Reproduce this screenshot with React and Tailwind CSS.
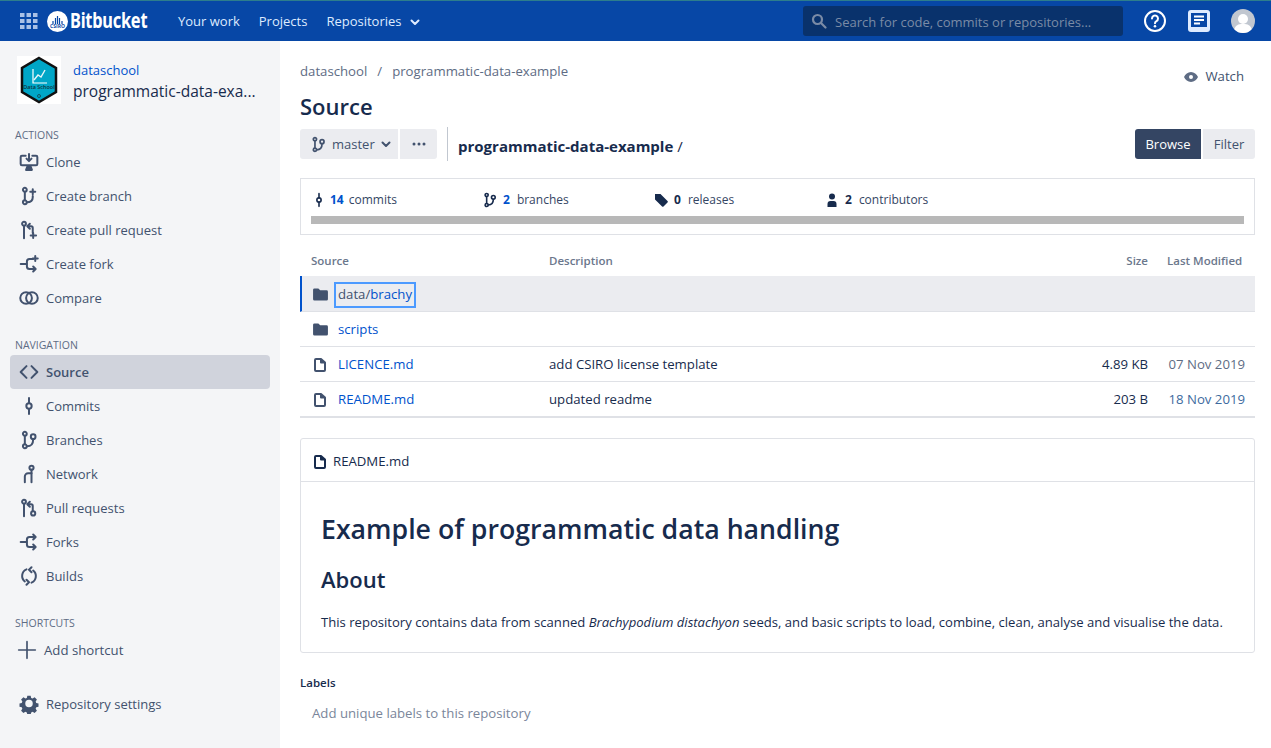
import React from 'react';

const Svg = ({ size = 24, sw = 2.4, className = '', children }) => (
    <svg width={size} height={size} viewBox="0 0 24 24" fill="none" stroke="currentColor" strokeWidth={sw} strokeLinecap="round" strokeLinejoin="round" className={`shrink-0 ${className}`}>{children}</svg>
);

const CloneIcon = (p) => (
    <Svg {...p}>
        <path d="M8 4.500H3.500A1.500 1.500 0 0 0 2 6v8.500A1.500 1.500 0 0 0 3.500 16h17a1.500 1.500 0 0 0 1.500-1.500V6a1.500 1.500 0 0 0-1.500-1.500H16" />
        <path d="M12 2.500v8M9 8l3 3 3-3" />
        <path d="M8.500 21.500l1.500-4h4l1.500 4z" fill="currentColor" />
    </Svg>
);
const BranchPath = () => (
    <>
        <circle cx="7" cy="4.500" r="2.300" />
        <circle cx="7" cy="19.500" r="2.300" />
        <path d="M7 7v10" />
    </>
);
const CreateBranchIcon = (p) => (
    <Svg {...p}>
        <BranchPath />
        <path d="M9.500 19.500c4.500 0 7-1.500 7-6v-1.500" />
        <path d="M16.500 4v6M13.500 7h6" />
    </Svg>
);
const CreatePrIcon = (p) => (
    <Svg {...p}>
        <circle cx="6" cy="4.500" r="2.300" />
        <path d="M6 7v15" />
        <path d="M11 7.500h3.500a2 2 0 0 1 2 2v6" />
        <path d="M13 4.500l-3 3 3 3" />
        <path d="M17 15.500v6M14 18.500h6.500" />
    </Svg>
);
const CreateForkIcon = (p) => (
    <Svg {...p}>
        <path d="M2 12h7" />
        <path d="M17 6h-4.500a3 3 0 0 0-3 3v6a3 3 0 0 0 3 3H19" />
        <path d="M17 15l3 3-3 3" />
        <path d="M19.500 2.500v6M16.500 5.500h6" />
    </Svg>
);
const CompareIcon = (p) => (
    <Svg {...p}>
        <circle cx="8.500" cy="12" r="7" />
        <circle cx="15.500" cy="12" r="7" />
    </Svg>
);
const SourceIcon = (p) => (
    <Svg {...p}>
        <path d="M9 5l-7 7 7 7M15 5l7 7-7 7" />
    </Svg>
);
const CommitIcon = (p) => (
    <Svg {...p}>
        <circle cx="12" cy="12" r="3.200" />
        <path d="M12 2.500v6M12 15.500v6" />
    </Svg>
);
const BranchesIcon = (p) => (
    <Svg {...p}>
        <BranchPath />
        <circle cx="17" cy="8" r="2.800" />
        <path d="M9.500 19.500c4.500 0 7.500-1.500 7.500-8.500" />
    </Svg>
);
const NetworkIcon = (p) => (
    <Svg {...p}>
        <circle cx="15" cy="4.500" r="2.500" />
        <path d="M15 7v15" />
        <path d="M15 11h-4a4 4 0 0 0-4 4v7" />
    </Svg>
);
const PrIcon = (p) => (
    <Svg {...p}>
        <circle cx="6" cy="4.500" r="2.300" />
        <path d="M6 7v15" />
        <path d="M11 7.500h3.500a2 2 0 0 1 2 2v6" />
        <path d="M13 4.500l-3 3 3 3" />
        <circle cx="17" cy="18.500" r="2.500" />
    </Svg>
);
const ForksIcon = (p) => (
    <Svg {...p}>
        <path d="M2 12h7" />
        <path d="M19 6h-6.500a3 3 0 0 0-3 3v6a3 3 0 0 0 3 3H19" />
        <path d="M17 3l3 3-3 3M17 15l3 3-3 3" />
    </Svg>
);
const BuildsIcon = (p) => (
    <Svg {...p}>
        <path d="M17 5.500A8.500 8.500 0 0 1 15 20" />
        <path d="M7 18.500A8.500 8.500 0 0 1 9 4" />
        <path d="M15 1.500l-3 3 3 3M9 22.500l3-3-3-3" />
    </Svg>
);
const PlusIcon = (p) => (
    <Svg {...p} sw={2}>
        <path d="M12 2v20M2 12h20" />
    </Svg>
);
const GearIcon = ({ size = 24, className = '' }) => (
    <svg width={size} height={size} viewBox="0 0 24 24" fill="currentColor" className={`shrink-0 ${className}`}>
        <path fillRule="evenodd" d="M10 2.500h4l.6 2.700 1.700.7 2.400-1.500 2.800 2.800-1.500 2.400.7 1.700 2.700.6v4l-2.700.6-.7 1.700 1.500 2.400-2.800 2.800-2.400-1.500-1.700.7-.6 2.700h-4l-.6-2.700-1.700-.7-2.400 1.500-2.800-2.800 1.500-2.400-.7-1.700-2.700-.6v-4l2.700-.6.7-1.700-1.500-2.400 2.800-2.800 2.400 1.500 1.700-.7zM12 7.500a4.500 4.500 0 1 0 0 9 4.500 4.500 0 0 0 0-9z" transform="translate(0 -.5)" />
    </svg>
);
const FolderIcon = ({ className = '' }) => (
    <svg width="15" height="13" viewBox="0 0 16 14" fill="currentColor" className={`shrink-0 ${className}`}>
        <path d="M1.500 0.500h4.200l2 2h6.800a1.500 1.500 0 0 1 1.500 1.500v8a1.500 1.500 0 0 1-1.500 1.500h-13A1.500 1.500 0 0 1 0 12V2A1.500 1.500 0 0 1 1.500 0.500z" />
    </svg>
);
const FileIcon = ({ className = '' }) => (
    <svg width="12" height="14" viewBox="0 0 12 14" fill="none" stroke="currentColor" strokeWidth="2" strokeLinejoin="round" className={`shrink-0 ${className}`}>
        <path d="M2 1h5v3.500h4V12a1 1 0 0 1-1 1H2a1 1 0 0 1-1-1V2a1 1 0 0 1 1-1zM7 1l4 3.500" />
    </svg>
);
const Chevron = ({ className = '' }) => (
    <svg width="10" height="7" viewBox="0 0 10 7" fill="none" stroke="currentColor" strokeWidth="2" strokeLinecap="round" strokeLinejoin="round" className={`shrink-0 ${className}`}>
        <path d="M1.500 1.500L5 5l3.500-3.500" />
    </svg>
);

const actions = [
    ['Clone', CloneIcon],
    ['Create branch', CreateBranchIcon],
    ['Create pull request', CreatePrIcon],
    ['Create fork', CreateForkIcon],
    ['Compare', CompareIcon],
];
const navigation = [
    ['Source', SourceIcon],
    ['Commits', CommitIcon],
    ['Branches', BranchesIcon],
    ['Network', NetworkIcon],
    ['Pull requests', PrIcon],
    ['Forks', ForksIcon],
    ['Builds', BuildsIcon],
];

const SideLabel = ({ children, className = '' }) => (
    <div className={`pl-[15px] h-4 leading-4 text-[10.500px] font-medium text-[#5e6c84] uppercase ${className}`}>{children}</div>
);

const SideItem = ({ label, icon: Icon, active }) => (
    <div className={`flex items-center h-[34px] w-[260px] ml-[10px] pl-[9px] rounded ${active ? 'bg-[#d0d3dc] font-semibold' : ''} text-[#42526e]`}>
        <Icon size={20} className="text-[#42526e]" />
        <span className="ml-[7px] pt-[2px] text-[13px]">{label}</span>
    </div>
);

const Stat = ({ icon, num, label, blue, tight }) => (
    <div className="flex items-center w-[171px] text-[12px] text-[#172b4d]">
        <span className="w-4 flex justify-center">{icon}</span>
        <span className={`font-bold ${tight ? 'ml-[3px]' : 'ml-[5px]'} ${blue ? 'text-[#0052cc]' : ''}`}>{num}</span>
        <span className={`${tight ? 'ml-[5px]' : 'ml-[7px]'} text-[#344563]`}>{label}</span>
    </div>
);

const rows = [
    { name: 'scripts', folder: true },
    { name: 'LICENCE.md', desc: 'add CSIRO license template', size: '4.89 KB', date: '07 Nov 2019' },
    { name: 'README.md', desc: 'updated readme', size: '203 B', date: '18 Nov 2019', dateBlue: true },
];

const App = () => {
    return (
        <div className="w-[1271px] h-[748px] overflow-hidden flex flex-col bg-white text-[#172b4d] font-['Open_Sans','Noto_Sans',sans-serif] text-[13.200px]">
            <header className="h-[41px] shrink-0 bg-[#0747a6] border-t border-[#2d7d8c] flex items-center text-[#deebff] pr-[16px]">
                <svg width="18" height="16" viewBox="0 0 18 16" fill="#a9c1e6" className="ml-[20px] shrink-0">
                    <rect x="0" y="0" width="4.500" height="4" /><rect x="6.500" y="0" width="4.500" height="4" /><rect x="13" y="0" width="4.500" height="4" />
                    <rect x="0" y="6" width="4.500" height="4" /><rect x="6.500" y="6" width="4.500" height="4" /><rect x="13" y="6" width="4.500" height="4" />
                    <rect x="0" y="12" width="4.500" height="4" /><rect x="6.500" y="12" width="4.500" height="4" /><rect x="13" y="12" width="4.500" height="4" />
                </svg>
                <div className="ml-[9px] w-[21px] h-[21px] rounded-full bg-white flex flex-col items-center justify-end pb-[3px] shrink-0">
                    <svg width="13" height="8" viewBox="0 0 13 8" stroke="#0747a6" strokeWidth="1.200"><path d="M2 8V5M4.500 8V2M6.500 8V0M8.500 8V2M11 8V5" /></svg>
                    <span className="text-[5px] leading-[5px] font-bold text-[#0747a6]">CSIRO</span>
                </div>
                <span className="ml-[2px] w-[77px] text-[21px] font-bold text-white tracking-[-0.3px] font-['Noto_Sans',sans-serif] whitespace-nowrap origin-left scale-x-[0.78]">Bitbucket</span>
                <nav className="flex items-center ml-[31px] pt-[2px] text-[13px] whitespace-nowrap">
                    <span>Your work</span>
                    <span className="ml-[19px]">Projects</span>
                    <span className="ml-[19px]">Repositories</span>
                    <Chevron className="ml-[8px] text-[#deebff]" />
                </nav>
                <div className="ml-auto w-[320px] h-[30px] rounded-[3px] bg-[#09326c] flex items-center pl-[8px]">
                    <svg width="16" height="16" viewBox="0 0 16 16" fill="none" stroke="#7a8ba6" strokeWidth="2.200" strokeLinecap="round" className="shrink-0">
                        <circle cx="6.500" cy="6.500" r="4.500" /><path d="M10 10l4.500 4.500" />
                    </svg>
                    <span className="ml-[8px] pt-[4px] text-[13px] text-[#7a8ba6] whitespace-nowrap">Search for code, commits or repositories...</span>
                </div>
                <svg width="24" height="24" viewBox="0 0 24 24" fill="none" className="ml-[20px] shrink-0">
                    <circle cx="12" cy="12" r="10" stroke="white" strokeWidth="2" />
                    <path d="M9 9.500a3 3 0 1 1 4.500 2.600c-1 .6-1.500 1.100-1.500 2.100" stroke="white" strokeWidth="2" strokeLinecap="round" />
                    <circle cx="12" cy="17.300" r="1.300" fill="white" />
                </svg>
                <svg width="22" height="22" viewBox="0 0 22 22" className="ml-[21px] shrink-0">
                    <rect x="0" y="0" width="22" height="22" rx="3" fill="#deebff" />
                    <path d="M3 3h16v14H3z" fill="#0747a6" />
                    <path d="M6 6.500h10M6 10h10M6 13.500h6" stroke="white" strokeWidth="2" />
                </svg>
                <div className="ml-[21px] w-6 h-6 rounded-full bg-[#c1c7d0] overflow-hidden relative shrink-0">
                    <div className="absolute left-[7px] top-[5px] w-[10px] h-[10px] rounded-full bg-white" />
                    <div className="absolute left-[3px] top-[15px] w-[18px] h-[14px] rounded-full bg-white" />
                </div>
            </header>

            <div className="flex flex-1 min-h-0">
                <aside className="w-[280px] shrink-0 bg-[#f4f5f7] flex flex-col">
                    <div className="flex items-start pl-[17px] pt-[15px] h-[79px]">
                        <div className="w-[44px] h-[48px] bg-white flex items-center justify-center shrink-0">
                            <svg width="40" height="48" viewBox="0 0 40 48">
                                <path d="M20 2l17 10v24L20 46 3 36V12z" fill="#00a6c7" stroke="#111" strokeWidth="2.500" />
                                <path d="M14 13v14h14" stroke="white" strokeWidth="1.200" fill="none" />
                                <path d="M15 24l4-5 3 2 4-7" stroke="#e8f6fa" strokeWidth="1.400" fill="none" />
                                <text x="20" y="33" textAnchor="middle" fontSize="5.500" fontWeight="600" fill="#12323a">Data School</text>
                                <circle cx="20" cy="40" r="1.500" fill="none" stroke="#12323a" strokeWidth=".7" />
                            </svg>
                        </div>
                        <div className="ml-[12px] min-w-0 w-[190px] pt-[4px]">
                            <div className="text-[13px] leading-[20px] text-[#0052cc] h-[20px]">dataschool</div>
                            <div className="text-[15.500px] leading-[22px] font-medium text-[#172b4d] truncate">programmatic-data-exa...</div>
                        </div>
                    </div>
                    <SideLabel className="mt-[7px]">Actions</SideLabel>
                    <div className="mt-[2px]">
                        {actions.map(([label, icon]) => <SideItem key={label} label={label} icon={icon} />)}
                    </div>
                    <SideLabel className="mt-[22px]">Navigation</SideLabel>
                    <div className="mt-[2px]">
                        {navigation.map(([label, icon]) => <SideItem key={label} label={label} icon={icon} active={label === 'Source'} />)}
                    </div>
                    <SideLabel className="mt-[22px]">Shortcuts</SideLabel>
                    <div className="flex items-center h-[34px] mt-[2px] pl-[17px] text-[#42526e]">
                        <PlusIcon size={20} />
                        <span className="ml-[7px] pt-[2px] text-[13.200px]">Add shortcut</span>
                    </div>
                    <div className="mt-[20px]"><SideItem label="Repository settings" icon={GearIcon} /></div>
                </aside>

                <main className="flex-1 min-w-0 pl-[20px] pr-[16px]">
                    <div className="flex justify-between pt-[20px] h-[49px]">
                        <div className="text-[#5e6c84] leading-5">
                            dataschool<span className="mx-[10px]">/</span>programmatic-data-example
                        </div>
                        <div className="flex items-center h-[30px] pt-[2px] pr-[11px] text-[#42526e]">
                            <svg width="14" height="10" viewBox="0 0 14 10" className="mr-[7px]"><path fillRule="evenodd" d="M7 0c3.200 0 5.700 2.200 7 5-1.300 2.800-3.800 5-7 5S1.300 7.800 0 5c1.300-2.800 3.800-5 7-5zm0 3a2 2 0 1 0 0 4 2 2 0 0 0 0-4z" fill="#5e6c84" /></svg>
                            Watch
                        </div>
                    </div>
                    <h1 className="text-[22px] leading-[32px] font-semibold text-[#172b4d]">Source</h1>
                    <div className="flex items-center mt-[7px] h-[30px]">
                        <div className="flex items-center h-[30px] w-[98px] bg-[#ebecf0] rounded-l-[3px] pl-[11px] text-[#42526e]">
                            <BranchesIcon size={17} className="-ml-[1px]" />
                            <span className="ml-[5px] pt-[2px] text-[13px]">master</span>
                            <Chevron className="ml-[6px]" />
                        </div>
                        <div className="flex items-center justify-center h-[30px] w-[37px] ml-[2px] bg-[#ebecf0] rounded-r-[3px]">
                            <svg width="14" height="4" viewBox="0 0 14 4" fill="#42526e"><circle cx="2" cy="2" r="1.500" /><circle cx="7" cy="2" r="1.500" /><circle cx="12" cy="2" r="1.500" /></svg>
                        </div>
                        <div className="ml-[10px] w-px h-[34px] bg-[#c1c7d0]" />
                        <div className="ml-[10px] mt-[5px] text-[15px] font-bold text-[#172b4d]">programmatic-data-example <span className="font-normal">/</span></div>
                        <div className="ml-auto flex h-[30px] text-[13px]">
                            <div className="w-[66px] pt-[2px] bg-[#344563] text-white rounded-l-[3px] flex items-center justify-center">Browse</div>
                            <div className="w-[52px] pt-[2px] ml-[2px] bg-[#ebecf0] text-[#42526e] rounded-r-[3px] flex items-center justify-center">Filter</div>
                        </div>
                    </div>

                    <div className="mt-[19px] h-[57px] border border-[#dfe1e6] px-[10px] pt-[10px]">
                        <div className="flex h-[21px] items-center">
                            <Stat blue tight num="14" label="commits" icon={<CommitIcon size={16} className="text-[#172b4d]" />} />
                            <Stat blue num="2" label="branches" icon={<BranchesIcon size={16} className="text-[#172b4d]" />} />
                            <Stat num="0" label="releases" icon={
                                <svg width="14" height="14" viewBox="0 0 14 14" fill="#172b4d"><path fillRule="evenodd" d="M1 1h5.500L13.500 8a1 1 0 0 1 0 1.400l-4 4a1 1 0 0 1-1.400 0L1 6.500z" /></svg>
                            } />
                            <Stat num="2" label="contributors" icon={
                                <svg width="14" height="14" viewBox="0 0 14 14" fill="#172b4d"><circle cx="7" cy="3.500" r="3" /><path d="M2.500 14v-3a3 3 0 0 1 3-3h3a3 3 0 0 1 3 3v3z" /></svg>
                            } />
                        </div>
                        <div className="mt-[6px] h-2 bg-[#b8b8b8]" />
                    </div>

                    <div className="flex items-center h-[41px] pt-[10px] text-[11.500px] font-semibold text-[#6b778c]">
                        <div className="w-[249px] pl-[11px]">Source</div>
                        <div className="flex-1">Description</div>
                        <div className="w-[60px] text-right">Size</div>
                        <div className="w-[107px] pl-[19px]">Last Modified</div>
                    </div>
                    <div className="flex items-center h-[36px] bg-[#ebecf0] border-l-2 border-[#0052cc] border-b border-b-[#dfe1e6] pt-[2px]">
                        <FolderIcon className="ml-[11px] text-[#42526e]" />
                        <span className="ml-[6px] px-[2px] h-[26px] flex items-center border-2 border-[#4c9aff]">
                            <span className="text-[#42526e]">data/</span><span className="text-[#0052cc]">brachy</span>
                        </span>
                    </div>
                    {rows.map((row, i) => (
                        <div key={row.name} className={`flex items-center pt-[2px] ${i === rows.length - 1 ? 'border-b-2 h-[36px]' : 'border-b h-[35px]'} border-[#dfe1e6]`}>
                            <div className="w-[249px] flex items-center">
                                {row.folder
                                    ? <FolderIcon className="ml-[13px] text-[#42526e]" />
                                    : <FileIcon className="ml-[14px] text-[#42526e]" />}
                                <span className={`${row.folder ? 'ml-[10px]' : 'ml-[12px]'} text-[#0052cc]`}>{row.name}</span>
                            </div>
                            <div className="flex-1 text-[#172b4d]">{row.desc}</div>
                            <div className="w-[80px] text-right text-[#172b4d]">{row.size}</div>
                            <div className={`w-[107px] text-right pr-[10px] ${row.dateBlue ? 'text-[#3d6a9e]' : 'text-[#5e6c84]'}`}>{row.date}</div>
                        </div>
                    ))}

                    <section className="mt-[20px] h-[215px] border border-[#dfe1e6] rounded-[3px]">
                        <div className="flex items-center h-[43px] pl-[13px] pt-[4px] border-b border-[#dfe1e6]">
                            <FileIcon className="text-[#172b4d]" />
                            <span className="ml-[7px] text-[#172b4d]">README.md</span>
                        </div>
                        <div className="px-[20px]">
                            <h2 className="mt-[25px] text-[26.700px] leading-[44px] font-semibold text-[#172b4d] whitespace-nowrap">Example of programmatic data handling</h2>
                            <h3 className="mt-[10px] text-[22px] leading-[36px] font-semibold text-[#172b4d]">About</h3>
                            <p className="mt-[15px] text-[13.100px] leading-5 text-[#172b4d] whitespace-nowrap">This repository contains data from scanned <em>Brachypodium distachyon</em> seeds, and basic scripts to load, combine, clean, analyse and visualise the data.</p>
                        </div>
                    </section>

                    <div className="mt-[22px] text-[11.500px] leading-4 font-semibold text-[#172b4d]">Labels</div>
                    <div className="mt-[12px] pl-[12px] text-[13.200px] leading-5 text-[#7a869a]">Add unique labels to this repository</div>
                </main>
            </div>
        </div>
    );
};

export default App;
